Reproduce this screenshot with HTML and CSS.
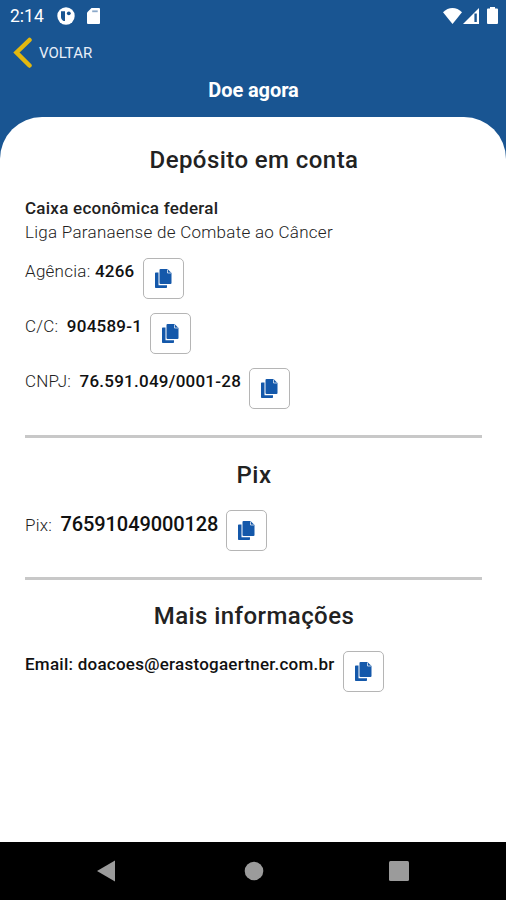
FILE: index.html
```html
<!DOCTYPE html>
<html lang="pt-BR">
<head>
    <meta charset="UTF-8">
    <meta name="viewport" content="width=device-width, initial-scale=1.0">
    <title>Doe agora</title>
    <link rel="stylesheet" href="styles.css">
</head>
<body>
    <svg width="0" height="0" class="sprite">
        <symbol id="copy" viewBox="0 0 17 19">
            <path d="M5.500 0H12.500l4 4v10a1 1 0 0 1-1 1h-10a1 1 0 0 1-1-1V1a1 1 0 0 1 1-1z"/>
            <path d="M12.500 0.500v3.500H16" fill="none" stroke="#fff" stroke-width="0.700"/>
            <path d="M0.800 3.500h2.700v12.700h8.500v2a.8.8 0 0 1-.8.8H.8a.8.8 0 0 1-.8-.8V4.300a.8.8 0 0 1 .8-.8z"/>
        </symbol>
    </svg>

    <header class="header">
        <div class="status-bar">
            <span class="time">2:14</span>
            <svg class="status-app" width="18" height="18" viewBox="0 0 18 18">
                <circle cx="9" cy="9" r="8.7" fill="#fff"/>
                <path d="M4 4.300h4v9.700h-1.500c-1.500-.8-2.500-2.300-2.500-4.300z" fill="#195592"/>
                <circle cx="11.800" cy="6.300" r="1.900" fill="#195592"/>
            </svg>
            <svg class="status-sd" width="13" height="16" viewBox="0 0 13 16">
                <path d="M4.500 0H12a1 1 0 0 1 1 1v14a1 1 0 0 1-1 1H1a1 1 0 0 1-1-1V4.500z" fill="#fff"/>
                <path d="M5.200 3.300h5.500" stroke="#8ba8c9" stroke-width="1.800"/>
            </svg>
            <svg class="status-wifi" width="19" height="16" viewBox="0 0 19 16">
                <path d="M9.500 16L0 4.300C5.500-1.400 13.500-1.400 19 4.300z" fill="#fff"/>
            </svg>
            <svg class="status-signal" width="16" height="16" viewBox="0 0 16 16">
                <path d="M0 16L16 0v16z" fill="#fff"/>
                <path d="M12.600 5.500v8.500" stroke="#195592" stroke-width="2.400"/>
            </svg>
            <svg width="11" height="17" viewBox="0 0 11 17">
                <path d="M3 0h5v1.500h2a1 1 0 0 1 1 1V16a1 1 0 0 1-1 1H1a1 1 0 0 1-1-1V2.500a1 1 0 0 1 1-1h2z" fill="#fff"/>
            </svg>
        </div>
        <a class="back" href="#">
            <svg width="20" height="32" viewBox="0 0 20 32">
                <path d="M16.500 3L3.500 15.500l13 13" fill="none" stroke="#e3b80f" stroke-width="4.500" stroke-linecap="round"/>
            </svg>
            <span>VOLTAR</span>
        </a>
        <h1>Doe agora</h1>
    </header>

    <main class="sheet">
        <section>
            <h2>Depósito em conta</h2>
            <p class="bank">Caixa econômica federal</p>
            <p class="owner">Liga Paranaense de Combate ao Câncer</p>
            <div class="row agency">
                <p>Agência: <b>4266</b></p>
                <button class="copy"><svg><use href="#copy"/></svg></button>
            </div>
            <div class="row account">
                <p>C/C: <b>904589-1</b></p>
                <button class="copy"><svg><use href="#copy"/></svg></button>
            </div>
            <div class="row cnpj">
                <p>CNPJ: <b>76.591.049/0001-28</b></p>
                <button class="copy"><svg><use href="#copy"/></svg></button>
            </div>
        </section>
        <section>
            <h2 class="pix-title">Pix</h2>
            <div class="row pix">
                <p>Pix: <b>76591049000128</b></p>
                <button class="copy"><svg><use href="#copy"/></svg></button>
            </div>
        </section>
        <section>
            <h2 class="info-title">Mais informações</h2>
            <div class="row email">
                <p><b>Email: doacoes@erastogaertner.com.br</b></p>
                <button class="copy"><svg><use href="#copy"/></svg></button>
            </div>
        </section>
    </main>

    <nav class="nav-bar">
        <svg width="18" height="22" viewBox="0 0 18 22"><path d="M0 11L18 0.500v21z"/></svg>
        <svg class="home" width="20" height="20" viewBox="0 0 20 20"><circle cx="10" cy="10" r="9.300"/></svg>
        <svg width="20" height="20" viewBox="0 0 20 20"><rect width="20" height="20" rx="1.500"/></svg>
    </nav>
</body>
</html>
```
FILE: styles.css
```css
:root {
    --blue: #195592;
    --icon-blue: #1458aa;
}

* {
    box-sizing: border-box;
}

body {
    margin: 0;
    height: 900px;
    display: flex;
    flex-direction: column;
    background: var(--blue);
    color: #222;
    font-family: Roboto, sans-serif;
    overflow: hidden;
}

h1, h2, p {
    margin: 0;
}

.sprite {
    display: none;
}

/* header */
.header {
    height: 117px;
    color: #fff;
}

.status-bar {
    height: 31px;
    padding: 0 8px 0 10px;
    display: flex;
    align-items: center;
}

.time {
    width: 47px;
    padding-top: 1px;
    font-size: 17.5px;
}

.status-sd {
    margin-left: 12px;
}

.status-wifi {
    margin-left: auto;
}

.status-signal {
    margin: 0 8px 0 1px;
}

.back {
    height: 43px;
    padding-left: 13px;
    display: flex;
    align-items: center;
    gap: 6px;
    color: #e8eef8;
    font-size: 15px;
    text-decoration: none;
}

h1 {
    padding-left: 1px;
    font-size: 20px;
    font-weight: 700;
    line-height: 32px;
    letter-spacing: -0.1px;
    text-align: center;
}

/* content */
.sheet {
    flex: 1;
    padding: 0 24px 0 25px;
    background: #fff;
    border-radius: 42px 42px 0 0;
}

section {
    padding-bottom: 12px;
}

section + section {
    border-top: 3px solid #c8c8c8;
}

h2 {
    height: 79px;
    padding: 27px 0 0 1px;
    font-size: 24px;
    font-weight: 500;
    line-height: 32px;
    letter-spacing: 0.43px;
    text-align: center;
}

.pix-title {
    height: 72px;
    padding-top: 21px;
}

.info-title {
    height: 71px;
    padding-top: 20px;
}

.bank, .owner {
    font-size: 17px;
    line-height: 24px;
}

.bank {
    font-weight: 500;
    letter-spacing: 0.25px;
}

.owner {
    margin-bottom: 14px;
    letter-spacing: 0.27px;
}

.owner, .row p {
    font-weight: 300;
}

.row {
    height: 55px;
    display: flex;
    align-items: flex-start;
    gap: 8px;
}

.row p {
    font-size: 17px;
    line-height: 26px;
    letter-spacing: 0.25px;
    white-space: nowrap;
}

.row b {
    color: #111;
    font-weight: 500;
    letter-spacing: 0.25px;
}

.account b, .cnpj b, .pix b {
    margin-left: 4px;
}

.row.pix p {
    line-height: 29px;
}

.row.pix b {
    font-size: 20px;
    letter-spacing: -0.1px;
}

.copy {
    width: 41px;
    height: 41px;
    padding: 0;
    display: flex;
    align-items: center;
    justify-content: center;
    background: #fff;
    border: 1px solid #b5b5b5;
    border-radius: 5px;
}

.copy svg {
    width: 17px;
    height: 19px;
    fill: var(--icon-blue);
}

/* android buttons */
.nav-bar {
    height: 58px;
    padding: 0 97px;
    display: flex;
    align-items: center;
    justify-content: space-between;
    background: #000;
    fill: #9b9b9b;
}

.home {
    margin-left: 3px;
}
```
